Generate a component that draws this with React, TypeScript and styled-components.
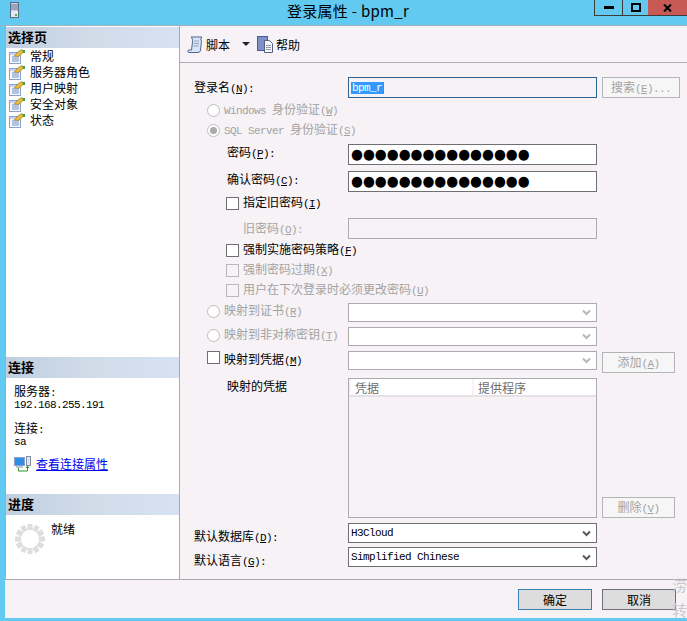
import React from "react";
import styled, { createGlobalStyle } from "styled-components";

const GlobalStyle = createGlobalStyle`
  html, body { margin: 0; padding: 0; background: #62c9f0; }
  body { font-family: "Noto Sans CJK SC", "Liberation Sans", sans-serif; font-size: 12px; color: #000; }
`;

const PAGE = "#f6f2f6";
const navItems = ["常规", "服务器角色", "用户映射", "安全对象", "状态"];

const Window = styled.div`
  position: relative;
  width: 687px;
  height: 621px;
  overflow: hidden;
  background: #62c9f0;
  display: flex;
  flex-direction: column;
`;

const TitleBar = styled.div`
  height: 25px;
  flex: none;
  display: grid;
  grid-template-columns: 1fr auto 1fr;
  border-bottom: 1px solid #a3b0bb;
`;

const TitleIcon = styled.div`
  padding: 2px 0 0 10px;
`;

const Title = styled.div`
  font-size: 15px;
  line-height: 21px;
  letter-spacing: 0.3px;
  padding-left: 9px;
`;

const WinButtons = styled.div`
  justify-self: end;
  display: flex;
  align-items: flex-start;
`;

const WinButton = styled.div<{ $w: number; $close?: boolean }>`
  width: ${(p) => p.$w}px;
  height: 16px;
  box-sizing: border-box;
  display: flex;
  align-items: center;
  justify-content: center;
  background: ${(p) => (p.$close ? "#c75a54" : "transparent")};
  border-left: ${(p) => (p.$close ? "0" : "1px solid #3c3c3c")};
  border-bottom: 1px solid #3c3c3c;
`;

const Body = styled.div`
  height: 592px;
  flex: none;
  margin-left: 5px;
  background: ${PAGE};
  display: flex;
  flex-direction: column;
`;

const Panels = styled.div`
  height: 553px;
  flex: none;
  display: flex;
  border-bottom: 1px solid #a9a9b1;
`;

const Sidebar = styled.div`
  width: 173px;
  flex: none;
  background: #fff;
  border-left: 1px solid #a9a9b1;
  border-right: 1px solid #a9a9b1;
  padding-top: 1px;
  display: flex;
  flex-direction: column;
`;

const SectionHead = styled.div`
  height: 21px;
  flex: none;
  padding-left: 2px;
  font-weight: 700;
  font-size: 13px;
  line-height: 19px;
  background: linear-gradient(to right, #c0cfdf, #d1dce9 50%, #d6e2f2);
`;

const Nav = styled.div`
  height: 309px;
  flex: none;
`;

const NavItem = styled.div`
  height: 16px;
  display: flex;
  align-items: center;
  padding-left: 3px;
  gap: 4px;
  line-height: 16px;
`;

const ConnBody = styled.div`
  height: 116px;
  flex: none;
  padding: 7px 0 0 8px;
  box-sizing: border-box;
`;

const ConnLine = styled.div<{ $gap?: number }>`
  height: 12px;
  line-height: 12px;
  margin-top: ${(p) => p.$gap ?? 0}px;
`;

const ConnLink = styled.a`
  margin-top: 10px;
  display: flex;
  align-items: center;
  gap: 5px;
  color: #0000ee;
  text-decoration: underline;
  line-height: 16px;
`;

const ProgressBody = styled.div`
  display: flex;
  padding: 7px 0 0 9px;
  gap: 6px;
`;

const SpinnerBox = styled.div`
  margin-top: 2px;
`;

const ProgressText = styled.div`
  line-height: 14px;
`;

const Main = styled.div`
  flex: 1;
  min-width: 0;
  display: flex;
  flex-direction: column;
`;

const Toolbar = styled.div`
  height: 36px;
  flex: none;
  margin-top: 1px;
  box-sizing: border-box;
  display: flex;
  align-items: center;
  padding: 0 0 1px 7px;
  border-bottom: 1px solid #aeaeb6;
`;

const ToolLabel = styled.span<{ $gap: number }>`
  margin: 0 ${(p) => p.$gap}px 0 2px;
`;

const Caret = styled.div`
  width: 0;
  height: 0;
  border-left: 4px solid transparent;
  border-right: 4px solid transparent;
  border-top: 4px solid #222;
  margin-right: 7px;
`;

const Form = styled.div`
  padding: 14px 0 0 14px;
`;

const Row = styled.div<{ $h: number; $mt?: number }>`
  height: ${(p) => p.$h}px;
  margin-top: ${(p) => p.$mt ?? 0}px;
  display: flex;
  align-items: flex-start;
`;

const LabelCell = styled.div<{ $indent?: number; $shift?: number; $up?: number; $off?: boolean }>`
  width: ${(p) => 154 - (p.$indent ?? 0)}px;
  height: 100%;
  flex: none;
  box-sizing: border-box;
  margin-left: ${(p) => p.$indent ?? 0}px;
  padding-top: ${(p) => p.$shift ?? 0}px;
  padding-bottom: ${(p) => p.$up ?? 0}px;
  display: flex;
  align-items: ${(p) => (p.$shift === undefined ? "center" : "flex-start")};
  gap: 4px;
  white-space: nowrap;
  line-height: 16px;
  color: ${(p) => (p.$off ? "#a3a3a3" : "#000")};
`;

const Latin = styled.span`
  font-family: "Liberation Mono", monospace;
  font-size: 11px;
  letter-spacing: -0.6px;
`;

const Field = styled.div<{ $h: number; $tone?: "on" | "off" | "focus"; $bg?: string }>`
  width: 249px;
  height: ${(p) => p.$h}px;
  flex: none;
  box-sizing: border-box;
  display: flex;
  align-items: center;
  padding: 0 3px 0 2px;
  overflow: hidden;
  white-space: nowrap;
  background: ${(p) => p.$bg ?? "#fff"};
  border: 1px solid
    ${(p) => (p.$tone === "focus" ? "#2a6496" : p.$tone === "on" ? "#6f6f73" : "#ababb0")};
`;

const Selected = styled.span`
  background: #3399ff;
  color: #fff;
  height: 11px;
  line-height: 10px;
  padding: 0 1px;
  border-right: 1px solid #c86a28;
`;

const Dots = styled.span`
  font-family: "DejaVu Sans", sans-serif;
  font-size: 13px;
  line-height: 19px;
  transform: scale(1.05, 1.1);
  transform-origin: left center;
`;

const Chevron = styled.svg`
  margin-left: auto;
  margin-right: 2px;
  flex: none;
`;

const Check = styled.div<{ $off?: boolean }>`
  width: 13px;
  height: 13px;
  flex: none;
  box-sizing: border-box;
  background: ${(p) => (p.$off ? PAGE : "#fff")};
  border: 1px solid ${(p) => (p.$off ? "#b9b9bd" : "#6f6f73")};
`;

const Radio = styled.div<{ $dot?: boolean }>`
  width: 13px;
  height: 13px;
  flex: none;
  box-sizing: border-box;
  border-radius: 50%;
  background: #fff;
  border: 1px solid #bdbdc1;
  display: flex;
  align-items: center;
  justify-content: center;
  &::after {
    content: "";
    width: 7px;
    height: 7px;
    border-radius: 50%;
    background: ${(p) => (p.$dot ? "#ababab" : "transparent")};
  }
`;

const SideButton = styled.div<{ $w: number; $mt?: number }>`
  width: ${(p) => p.$w}px;
  height: 21px;
  flex: none;
  box-sizing: border-box;
  margin: ${(p) => p.$mt ?? 0}px 0 0 5px;
  display: flex;
  align-items: center;
  justify-content: center;
  background: #f6f6f6;
  border: 1px solid #b4b4b8;
  color: #a3a3a3;
  line-height: 16px;
`;

const Table = styled.div`
  width: 249px;
  height: 140px;
  flex: none;
  box-sizing: border-box;
  border: 1px solid #ababb0;
`;

const TableHead = styled.div`
  height: 18px;
  box-sizing: border-box;
  display: flex;
  gap: 2px;
  padding-left: 2px;
  color: #6e6e6e;
  line-height: 17px;
  background: ${PAGE};
  border-bottom: 2px solid #e4e2e6;
`;

const HeadCell = styled.div<{ $w: number }>`
  width: ${(p) => p.$w}px;
  flex: none;
  box-sizing: border-box;
  padding-left: 4px;
  background: #fff;
`;

const Footer = styled.div`
  flex: 1;
  display: flex;
  justify-content: flex-end;
  align-items: flex-start;
  gap: 10px;
  padding: 9px 11px 0 0;
`;

const DialogButton = styled.div<{ $primary?: boolean }>`
  width: 74px;
  height: 21px;
  box-sizing: border-box;
  display: flex;
  align-items: center;
  justify-content: center;
  background: #dddddd;
  line-height: 16px;
  border: 1px solid ${(p) => (p.$primary ? "#3c7fb1" : "#6f6f73")};
`;

const Watermark = styled.div`
  position: absolute;
  left: 672px;
  top: 572px;
  width: 15px;
  font-size: 15px;
  line-height: 25px;
  color: #c9c9c9;
`;

const Hot = ({ k, colon }: { k: string; colon?: boolean }) => (
  <Latin>
    (<u>{k}</u>){colon ? ":" : ""}
  </Latin>
);

const ServerIcon = () => (
  <svg width="9" height="16" viewBox="0 0 9 16">
    <rect x="0.5" y="0.5" width="8" height="15" fill="#c3cfe0" stroke="#5c6b86" />
    <path d="M1 3h7M1 5h7M1 7h7" stroke="#6f7f9a" />
    <rect x="1" y="9" width="7" height="6" fill="#e4e9f2" />
    <rect x="5" y="12" width="2" height="2" fill="#5bb04a" />
  </svg>
);

const PageIcon = () => (
  <svg width="17" height="15" viewBox="0 0 17 15">
    <rect x="0.5" y="3.5" width="11" height="11" fill="#f4f7fc" stroke="#8ba2c6" />
    <rect x="1" y="4" width="10" height="2" fill="#c7d6ec" />
    <path d="M3 8h7M3 10h7M3 12h7" stroke="#6f8fc4" />
    <path d="M5 7 10 2l3-1.500 2 2-2 2-3 3z" fill="#e6b93a" stroke="#9a7a22" strokeWidth="0.6" />
    <path d="M13 1h3v3h-2z" fill="#4f9c3f" />
  </svg>
);

const ScriptIcon = () => (
  <svg width="17" height="17" viewBox="0 0 17 17">
    <path
      d="M4 1h11c-1.500 1-1.500 3-.5 4l-1 9c-.2 1.500-1 2.500-2.500 2.500H2c-1.300 0-1.800-2.500 0-2.500h2.500L5.500 6C5.500 4 5.500 2 4 1z"
      fill="#dbe4f2"
      stroke="#51678f"
    />
    <path d="M7 5h5M7 7.500h5M6.500 10h5" stroke="#8ea2c4" />
  </svg>
);

const HelpIcon = () => (
  <svg width="17" height="17" viewBox="0 0 17 17">
    <rect x="0.500" y="0.500" width="10" height="14" fill="#7f8fc8" stroke="#4a5a9a" />
    <path d="M7.500 4.500h5l3 3v9h-8z" fill="#f5f7fb" stroke="#56627e" />
    <path d="M9 9.500h5M9 11.500h5M9 13.500h5" stroke="#8c97ad" />
  </svg>
);

const LinkIcon = () => (
  <svg width="17" height="16" viewBox="0 0 17 16">
    <rect x="0.500" y="1.500" width="10" height="8" fill="#2f8ee8" stroke="#8ba2c6" />
    <rect x="2" y="10" width="7" height="2" fill="#b9c6da" />
    <rect x="12.500" y="0.500" width="4" height="9" fill="#dfe6f0" stroke="#7f8fa8" />
    <path d="M4.500 12v3h9v-4" fill="none" stroke="#2f9a1e" />
    <path d="M11.500 12h4L13.500 9.500z" fill="#2f9a1e" />
  </svg>
);

const Spinner = () => (
  <svg width="30" height="30" viewBox="0 0 30 30">
    {Array.from({ length: 12 }, (_, i) => (
      <rect
        key={i}
        x="12.500"
        y="0"
        width="5"
        height="6"
        fill="#dedede"
        transform={`rotate(${i * 30} 15 15)`}
      />
    ))}
  </svg>
);

const ChevronIcon = ({ color }: { color: string }) => (
  <Chevron width="9" height="7" viewBox="0 0 9 7">
    <path d="M1 1.500 4.500 5 8 1.500" fill="none" stroke={color} strokeWidth="2" />
  </Chevron>
);

const Select = ({ h, off, text }: { h: number; off?: boolean; text?: string }) => (
  <Field $h={h} $tone={off ? "off" : "on"}>
    {text && <Latin>{text}</Latin>}
    <ChevronIcon color={off ? "#b8b8b8" : "#5c5c5c"} />
  </Field>
);

export default function App() {
  return (
    <Window>
      <GlobalStyle />
      <TitleBar>
        <TitleIcon>
          <ServerIcon />
        </TitleIcon>
        <Title>
          登录属性 - <span>bpm_r</span>
        </Title>
        <WinButtons>
          <WinButton $w={28}>
            <svg width="10" height="3">
              <rect width="10" height="3" fill="#000" />
            </svg>
          </WinButton>
          <WinButton $w={26}>
            <svg width="10" height="9">
              <rect x="1" y="1" width="8" height="7" fill="none" stroke="#000" strokeWidth="2" />
            </svg>
          </WinButton>
          <WinButton $w={39} $close>
            <svg width="9" height="8">
              <path d="M1 0.500 8 7.500M8 0.500 1 7.500" stroke="#000" strokeWidth="2" />
            </svg>
          </WinButton>
        </WinButtons>
      </TitleBar>

      <Body>
        <Panels>
          <Sidebar>
            <SectionHead>选择页</SectionHead>
            <Nav>
              {navItems.map((item) => (
                <NavItem key={item}>
                  <PageIcon />
                  {item}
                </NavItem>
              ))}
            </Nav>

            <SectionHead>连接</SectionHead>
            <ConnBody>
              <ConnLine>
                服务器<Latin>:</Latin>
              </ConnLine>
              <ConnLine>
                <Latin>192.168.255.191</Latin>
              </ConnLine>
              <ConnLine $gap={13}>
                连接<Latin>:</Latin>
              </ConnLine>
              <ConnLine>
                <Latin>sa</Latin>
              </ConnLine>
              <ConnLink>
                <LinkIcon />
                查看连接属性
              </ConnLink>
            </ConnBody>

            <SectionHead>进度</SectionHead>
            <ProgressBody>
              <SpinnerBox>
                <Spinner />
              </SpinnerBox>
              <ProgressText>就绪</ProgressText>
            </ProgressBody>
          </Sidebar>

          <Main>
            <Toolbar>
              <ScriptIcon />
              <ToolLabel $gap={12}>脚本</ToolLabel>
              <Caret />
              <HelpIcon />
              <ToolLabel $gap={0}>帮助</ToolLabel>
            </Toolbar>

            <Form>
              <Row $h={21}>
                <LabelCell>
                  <span>
                    登录名<Hot k="N" colon />
                  </span>
                </LabelCell>
                <Field $h={21} $tone="focus" $bg={PAGE}>
                  <Latin>
                    <Selected>bpm_r</Selected>
                  </Latin>
                </Field>
                <SideButton $w={78}>
                  <span>
                    搜索<Hot k="E" />
                    <Latin>...</Latin>
                  </span>
                </SideButton>
              </Row>

              <Row $h={20} $mt={2}>
                <LabelCell $indent={13} $off>
                  <Radio />
                  <span>
                    <Latin>Windows </Latin>身份验证<Hot k="W" />
                  </span>
                </LabelCell>
              </Row>
              <Row $h={20}>
                <LabelCell $indent={13} $off>
                  <Radio $dot />
                  <span>
                    <Latin>SQL Server </Latin>身份验证<Hot k="S" />
                  </span>
                </LabelCell>
              </Row>

              <Row $h={21} $mt={4}>
                <LabelCell $indent={33} $shift={0}>
                  <span>
                    密码<Hot k="P" colon />
                  </span>
                </LabelCell>
                <Field $h={21} $tone="on">
                  <Dots>●●●●●●●●●●●●●●●</Dots>
                </Field>
              </Row>
              <Row $h={21} $mt={6}>
                <LabelCell $indent={33} $shift={0}>
                  <span>
                    确认密码<Hot k="C" colon />
                  </span>
                </LabelCell>
                <Field $h={21} $tone="on">
                  <Dots>●●●●●●●●●●●●●●●</Dots>
                </Field>
              </Row>

              <Row $h={18} $mt={2}>
                <LabelCell $indent={32}>
                  <Check />
                  <span>
                    指定旧密码<Hot k="I" />
                  </span>
                </LabelCell>
              </Row>
              <Row $h={21} $mt={6}>
                <LabelCell $indent={49} $off>
                  <span>
                    旧密码<Hot k="O" colon />
                  </span>
                </LabelCell>
                <Field $h={21} $tone="off" $bg={PAGE} />
              </Row>

              <Row $h={18} $mt={2}>
                <LabelCell $indent={32}>
                  <Check />
                  <span>
                    强制实施密码策略<Hot k="F" />
                  </span>
                </LabelCell>
              </Row>
              <Row $h={18} $mt={2}>
                <LabelCell $indent={32} $off>
                  <Check $off />
                  <span>
                    强制密码过期<Hot k="X" />
                  </span>
                </LabelCell>
              </Row>
              <Row $h={18} $mt={2}>
                <LabelCell $indent={32} $off>
                  <Check $off />
                  <span>
                    用户在下次登录时必须更改密码<Hot k="U" />
                  </span>
                </LabelCell>
              </Row>

              <Row $h={19} $mt={4}>
                <LabelCell $indent={13} $up={3} $off>
                  <Radio />
                  <span>
                    映射到证书<Hot k="R" />
                  </span>
                </LabelCell>
                <Select h={19} off />
              </Row>
              <Row $h={19} $mt={5}>
                <LabelCell $indent={13} $up={3} $off>
                  <Radio />
                  <span>
                    映射到非对称密钥<Hot k="T" />
                  </span>
                </LabelCell>
                <Select h={19} off />
              </Row>
              <Row $h={22} $mt={5}>
                <LabelCell $indent={13} $shift={0}>
                  <Check />
                  <span>
                    映射到凭据<Hot k="M" />
                  </span>
                </LabelCell>
                <Select h={19} off />
                <SideButton $w={73} $mt={1}>
                  <span>
                    添加<Hot k="A" />
                  </span>
                </SideButton>
              </Row>

              <Row $h={140} $mt={5}>
                <LabelCell $indent={33} $shift={0}>
                  映射的凭据
                </LabelCell>
                <Table>
                  <TableHead>
                    <HeadCell $w={121}>凭据</HeadCell>
                    <HeadCell $w={122}>提供程序</HeadCell>
                  </TableHead>
                </Table>
                <SideButton $w={73} $mt={119}>
                  <span>
                    删除<Hot k="V" />
                  </span>
                </SideButton>
              </Row>

              <Row $h={20} $mt={5}>
                <LabelCell $shift={5}>
                  <span>
                    默认数据库<Hot k="D" colon />
                  </span>
                </LabelCell>
                <Select h={20} text="H3Cloud" />
              </Row>
              <Row $h={20} $mt={4}>
                <LabelCell $shift={5}>
                  <span>
                    默认语言<Hot k="G" colon />
                  </span>
                </LabelCell>
                <Select h={20} text="Simplified Chinese" />
              </Row>
            </Form>
          </Main>
        </Panels>

        <Footer>
          <DialogButton $primary>确定</DialogButton>
          <DialogButton>取消</DialogButton>
        </Footer>
      </Body>
      <Watermark>
        涝
        <br />转
      </Watermark>
    </Window>
  );
}
